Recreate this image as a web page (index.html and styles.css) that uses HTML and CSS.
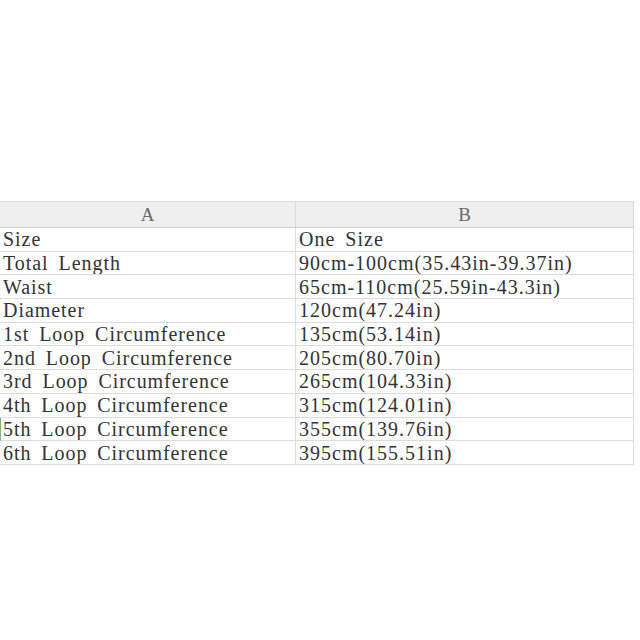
FILE: index.html
```html
<!DOCTYPE html>
<html>
<head>
<meta charset="utf-8">
<link rel="stylesheet" href="styles.css">
</head>
<body>
<div class="sheet">
  <div class="head">A</div><div class="head">B</div>
  <div class="cell label">Size</div><div class="cell">One Size</div>
  <div class="cell label">Total Length</div><div class="cell">90cm-100cm(35.43in-39.37in)</div>
  <div class="cell label">Waist</div><div class="cell">65cm-110cm(25.59in-43.3in)</div>
  <div class="cell label">Diameter</div><div class="cell">120cm(47.24in)</div>
  <div class="cell label">1st Loop Circumference</div><div class="cell">135cm(53.14in)</div>
  <div class="cell label">2nd Loop Circumference</div><div class="cell">205cm(80.70in)</div>
  <div class="cell label">3rd Loop Circumference</div><div class="cell">265cm(104.33in)</div>
  <div class="cell label">4th Loop Circumference</div><div class="cell">315cm(124.01in)</div>
  <div class="cell label mark">5th Loop Circumference</div><div class="cell">355cm(139.76in)</div>
  <div class="cell label">6th Loop Circumference</div><div class="cell">395cm(155.51in)</div>
</div>
</body>
</html>
```
FILE: styles.css
```css
html, body {
  margin: 0;
  background: #ffffff;
}
.sheet {
  margin-top: 201px;
  width: 634px;
  display: grid;
  grid-template-columns: 296px 338px;
  grid-template-rows: 26px;
  grid-auto-rows: 23.7px;
  border-top: 1px solid #dedede;
  font-family: "Liberation Serif", "Times New Roman", serif;
  font-size: 20px;
  letter-spacing: 1px;
  word-spacing: 4px;
  color: #333333;
}
.head {
  background: #efefef;
  color: #6a6a6a;
  border-right: 1px solid #d8d8d8;
  border-bottom: 1px solid #cfcfcf;
  box-sizing: border-box;
  display: flex;
  align-items: center;
  justify-content: center;
  font-size: 19px;
  letter-spacing: 0;
}
.cell {
  box-sizing: border-box;
  border-right: 1px solid #dcdcdc;
  border-bottom: 1px solid #dcdcdc;
  padding-left: 3px;
  padding-top: 1px;
  display: flex;
  align-items: center;
  white-space: nowrap;
  overflow: hidden;
}
.label {
  letter-spacing: 0.95px;
}
.mark {
  border-left: 1px solid #7fb27f;
  padding-left: 2px;
}
```
